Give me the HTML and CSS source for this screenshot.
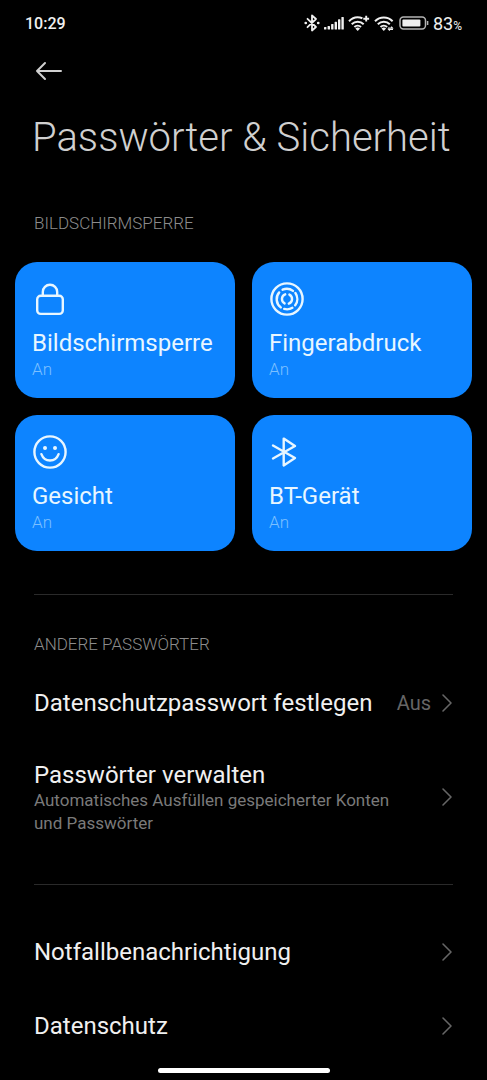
FILE: index.html
```html
<!DOCTYPE html>
<html lang="de">
<head>
    <meta charset="UTF-8">
    <meta name="viewport" content="width=device-width, initial-scale=1">
    <title>Passwörter &amp; Sicherheit</title>
    <link rel="stylesheet" href="styles.css">
</head>
<body>

<svg width="0" height="0" class="sprite">
    <defs>
        <symbol id="chevron" viewBox="0 0 12 20">
            <path d="M2 2l8 8-8 8"/>
        </symbol>
    </defs>
</svg>

<div class="status">
    <span class="status__time">10:29</span>
    <div class="status__icons">
        <!-- Bluetooth -->
        <svg width="16" height="18" viewBox="0 0 16 18" fill="none" stroke="currentColor" stroke-width="1.8" stroke-linejoin="round" stroke-linecap="round">
            <path d="M3.5 4.8l8.5 8.2-4 3.5v-15L12 5l-8.5 8.2"/>
            <path d="M1.7 9h.1M14.2 9h.1" stroke-width="2.6"/>
        </svg>
        <!-- Mobilfunk -->
        <svg width="20" height="14" viewBox="0 0 20 14" fill="currentColor">
            <rect x="0" y="11" width="2.4" height="2.5" rx=".6"/>
            <rect x="3.6" y="10" width="2.4" height="3.5" rx=".6"/>
            <rect x="7.1" y="8" width="2.4" height="5.5" rx=".6"/>
            <rect x="10.6" y="5.8" width="2.4" height="7.7" rx=".6"/>
            <rect x="14" y="3.2" width="2.4" height="10.3" rx=".6"/>
            <rect x="17.4" y="1" width="2.4" height="12.5" rx=".6"/>
        </svg>
        <!-- WLAN + -->
        <svg width="22" height="16" viewBox="0 0 22 16" fill="none" stroke="currentColor" stroke-width="2">
            <path d="M1 6.2a12.4 12.4 0 0 1 13.4-3"/>
            <path d="M3.7 9.2a8.6 8.6 0 0 1 12 0M6.4 12a4.8 4.8 0 0 1 6.6 0"/>
            <path d="M7.4 13.6a3.4 3.4 0 0 1 4.6 0l-2.3 2.3z" fill="currentColor" stroke="none"/>
            <path d="M18.2 .8v5.8M15.3 3.7h5.8" stroke-width="1.9"/>
        </svg>
        <!-- WLAN 2 -->
        <svg width="21" height="16" viewBox="0 0 21 16" fill="none" stroke="currentColor" stroke-width="2">
            <path d="M1 6.2a12.5 12.5 0 0 1 17.6 0"/>
            <path d="M3.8 9.2a8.6 8.6 0 0 1 12 0M6.5 12a4.8 4.8 0 0 1 6.6 0"/>
            <path d="M7.5 13.6a3.4 3.4 0 0 1 4.6 0l-2.3 2.3z" fill="currentColor" stroke="none"/>
            <path d="M14 13h4.4l-1.2-1.3M19 14.4h-4.4l1.2 1.2" stroke-width="1.1"/>
        </svg>
        <!-- Akku -->
        <svg width="30" height="14" viewBox="0 0 30 14" fill="none" stroke="currentColor">
            <rect x="1" y="1" width="25.5" height="12" rx="3.4" stroke-width="1.5" opacity=".75"/>
            <rect x="3.4" y="3.4" width="18" height="7.2" rx="1" fill="currentColor" stroke="none"/>
            <path d="M28.6 5v4" stroke-width="1.5" opacity=".75"/>
        </svg>
        <span class="status__battery">83<small>%</small></span>
    </div>
</div>

<header class="header">
    <button class="header__back" type="button" aria-label="Zurück">
        <svg width="28" height="20" viewBox="0 0 28 20" fill="none" stroke="currentColor" stroke-width="2" stroke-linecap="round" stroke-linejoin="round">
            <path d="M26 10H2M10 2L2 10l8 8"/>
        </svg>
    </button>
    <h1 class="header__title">Passwörter &amp; Sicherheit</h1>
</header>

<main class="content">
    <section>
        <h2 class="label">BILDSCHIRMSPERRE</h2>
        <div class="cards">
            <button class="card" type="button">
                <svg class="card__icon" viewBox="0 0 36 36">
                    <rect x="5.2" y="14.7" width="25.6" height="18.2" rx="3.5"/>
                    <path d="M10.8 14.5V11a7.2 7.2 0 0 1 14.4 0v3.5"/>
                </svg>
                <span class="card__title">Bildschirmsperre</span>
                <span class="card__state">An</span>
            </button>
            <button class="card" type="button">
                <svg class="card__icon" viewBox="0 0 36 36">
                    <circle cx="18" cy="18" r="15.6"/>
                    <path d="M10.2 11.4a10.3 10.3 0 0 0 1.6 15M13.6 8.7a10.3 10.3 0 0 1 10.4 1.2M26.4 12a10.3 10.3 0 0 1-.2 12.2M23.4 26.8a10.3 10.3 0 0 1-8.2 1.1"/>
                    <path d="M16.2 13.3a5 5 0 0 0-.6 9.1M19.8 22.7a5 5 0 0 0 .6-9.1"/>
                </svg>
                <span class="card__title">Fingerabdruck</span>
                <span class="card__state">An</span>
            </button>
            <button class="card" type="button">
                <svg class="card__icon" viewBox="0 0 36 36">
                    <circle cx="18" cy="18" r="15.6"/>
                    <path d="M9.4 20.2c1.6 4.4 4.8 6.3 8.6 6.3s7-1.9 8.6-6.3"/>
                    <path class="card__eyes" d="M13 14h.01M23 14h.01"/>
                </svg>
                <span class="card__title">Gesicht</span>
                <span class="card__state">An</span>
            </button>
            <button class="card" type="button">
                <svg class="card__icon" viewBox="0 0 36 36">
                    <path d="M4 11.5L26 24l-11.3 7.4V4.6L26 12 4 24.5"/>
                </svg>
                <span class="card__title">BT-Gerät</span>
                <span class="card__state">An</span>
            </button>
        </div>
    </section>

    <section class="group group--first">
        <h2 class="label">ANDERE PASSWÖRTER</h2>
        <a class="row" href="#">
            <span class="row__title">Datenschutzpasswort festlegen</span>
            <span class="row__value">Aus</span>
            <svg class="row__chevron"><use href="#chevron"/></svg>
        </a>
        <a class="row row--tall" href="#">
            <span class="row__text">
                <span class="row__title">Passwörter verwalten</span>
                <span class="row__desc">Automatisches Ausfüllen gespeicherter Konten und Passwörter</span>
            </span>
            <svg class="row__chevron"><use href="#chevron"/></svg>
        </a>
    </section>

    <section class="group">
        <a class="row" href="#">
            <span class="row__title">Notfallbenachrichtigung</span>
            <svg class="row__chevron"><use href="#chevron"/></svg>
        </a>
        <a class="row" href="#">
            <span class="row__title">Datenschutz</span>
            <svg class="row__chevron"><use href="#chevron"/></svg>
        </a>
    </section>
</main>

<div class="home"></div>

</body>
</html>
```
FILE: styles.css
```css
* {
    box-sizing: border-box;
    margin: 0;
    padding: 0;
}

:root {
    --bg: #000;
    --fg: #f0f0f0;
    --muted: #7a7a7a;
    --line: #2a2a2a;
    --primary: #0d84ff;
    --side: 34px;
}

body {
    background-color: var(--bg);
    color: var(--fg);
    display: flex;
    flex-direction: column;
    min-height: 100vh;
    font-family: Roboto, "Liberation Sans", sans-serif;
}

button {
    border: 0;
    background: none;
    color: inherit;
    font: inherit;
    text-align: left;
}

a {
    color: inherit;
    text-decoration: none;
}

.sprite {
    position: absolute;
}

/* Statusleiste */
.status {
    display: flex;
    align-items: center;
    justify-content: space-between;
    height: 46px;
    padding: 0 25px;
    font-size: 18px;
}

.status__time {
    font-size: 16px;
    font-weight: 500;
}

.status__icons {
    display: flex;
    align-items: center;
    gap: 4px;
}

.status__battery small {
    font-size: 12px;
}

/* Kopfbereich */
.header {
    padding: 0 32px;
}

.header__back {
    display: flex;
    align-items: center;
    width: 50px;
    height: 50px;
    padding-left: 3px;
    color: #d0d0d0;
}

.header__title {
    margin-top: 18px;
    color: #d0d0d0;
    font-size: 40px;
    font-weight: 300;
    line-height: 48px;
    white-space: nowrap;
}

.content {
    padding-top: 51px;
}

.label {
    padding: 0 var(--side);
    color: #8c8c8c;
    font-size: 17px;
    font-weight: 300;
    line-height: 20px;
}

/* Kacheln */
.cards {
    display: grid;
    grid-template-columns: 1fr 1fr;
    gap: 17px;
    padding: 29px 15px 0;
}

.card {
    display: flex;
    flex-direction: column;
    min-height: 136px;
    padding: 19px 17px 16px;
    border-radius: 22px;
    background-color: var(--primary);
    color: #e8f6ff;
}

.card__icon {
    flex-shrink: 0;
    width: 36px;
    height: 36px;
    fill: none;
    stroke: currentColor;
    stroke-width: 2.4;
    stroke-linecap: round;
    stroke-linejoin: round;
}

.card__eyes {
    stroke-width: 4;
}

.card__title {
    margin-top: 12px;
    font-size: 24px;
    line-height: 28px;
}

.card__state {
    color: #7cc0ff;
    font-size: 17px;
    font-weight: 300;
    line-height: 24px;
}

/* Listen */
.group {
    margin-top: 30px;
}

.group--first {
    margin-top: 43px;
}

.group::before {
    content: "";
    display: block;
    height: 1px;
    margin: 0 var(--side) 30px;
    background-color: var(--line);
}

.group .label {
    padding-top: 9px;
    padding-bottom: 12px;
}

.row {
    display: flex;
    align-items: center;
    min-height: 74px;
    padding: 0 var(--side);
}

.row--tall {
    min-height: 114px;
}

.row__text {
    flex: 1;
    padding-top: 2px;
    padding-right: 36px;
}

.row__title {
    display: block;
    flex: 1;
    font-size: 24px;
    line-height: 28px;
}

.row__desc {
    display: block;
    color: var(--muted);
    font-size: 17px;
    line-height: 23px;
}

.row__value {
    margin-right: 10px;
    color: #666;
    font-size: 20px;
}

.row__chevron {
    width: 12px;
    height: 20px;
    fill: none;
    stroke: #666;
    stroke-width: 1.6;
    stroke-linecap: round;
    stroke-linejoin: round;
}

/* Gestenleiste */
.home {
    width: 172px;
    height: 5px;
    margin: auto auto 7px;
    border-radius: 3px;
    background-color: #fff;
}
```
